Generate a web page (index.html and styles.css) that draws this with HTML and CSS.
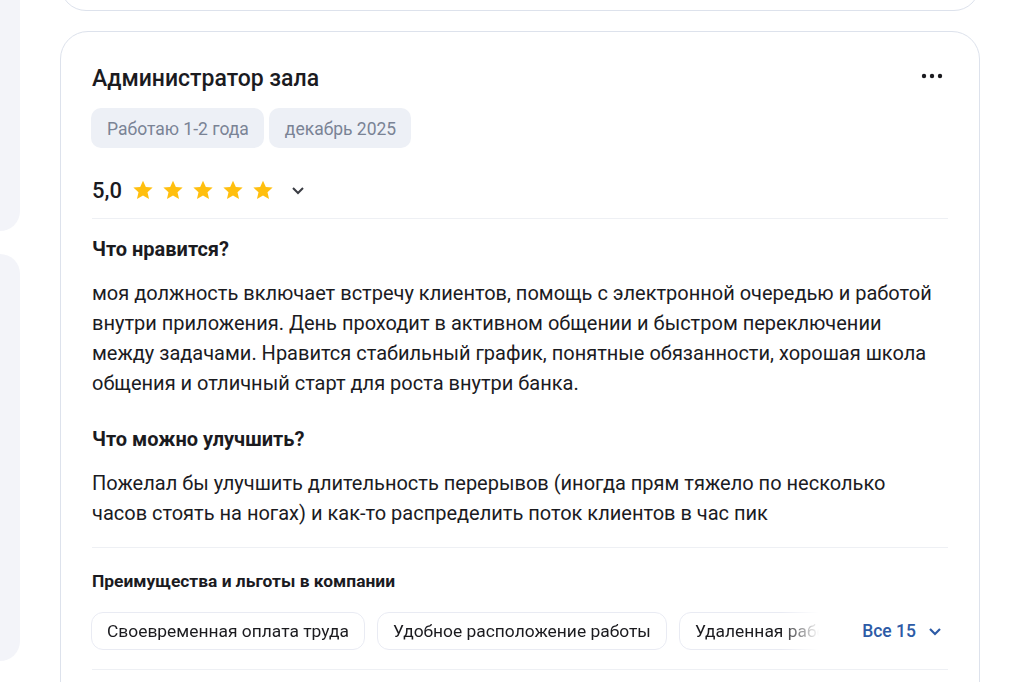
FILE: index.html
```html
<!DOCTYPE html>
<html lang="ru">
<head>
    <meta charset="utf-8">
    <meta name="viewport" content="width=device-width, initial-scale=1.0">
    <title>Отзывы сотрудников</title>
    <link rel="stylesheet" href="styles.css">
</head>
<body>
    <div id="rail">
        <div class="rail-box rail-top"></div>
        <div class="rail-box rail-mid"></div>
    </div>
    <div id="feed">
        <div class="card card-prev"></div>
        <div class="card review">
            <div class="review-head">
                <h2 class="review-title">Администратор зала</h2>
                <button class="more" aria-label="Ещё">
                    <svg width="24" height="6" viewBox="0 0 24 6"><circle cx="4" cy="3" r="2.2"/><circle cx="12" cy="3" r="2.2"/><circle cx="20" cy="3" r="2.2"/></svg>
                </button>
            </div>
            <div class="tags">
                <span class="tag">Работаю 1-2 года</span>
                <span class="tag">декабрь 2025</span>
            </div>
            <div class="rating">
                <span class="score">5,0</span>
                <span class="stars">
                    <svg class="star" viewBox="0 0 24 24"><path d="M12 1.8l3.1 6.9 7.4.7-5.6 5 1.7 7.4L12 17.9l-6.6 3.9 1.7-7.4-5.6-5 7.4-.7z"/></svg>
                    <svg class="star" viewBox="0 0 24 24"><path d="M12 1.8l3.1 6.9 7.4.7-5.6 5 1.7 7.4L12 17.9l-6.6 3.9 1.7-7.4-5.6-5 7.4-.7z"/></svg>
                    <svg class="star" viewBox="0 0 24 24"><path d="M12 1.8l3.1 6.9 7.4.7-5.6 5 1.7 7.4L12 17.9l-6.6 3.9 1.7-7.4-5.6-5 7.4-.7z"/></svg>
                    <svg class="star" viewBox="0 0 24 24"><path d="M12 1.8l3.1 6.9 7.4.7-5.6 5 1.7 7.4L12 17.9l-6.6 3.9 1.7-7.4-5.6-5 7.4-.7z"/></svg>
                    <svg class="star" viewBox="0 0 24 24"><path d="M12 1.8l3.1 6.9 7.4.7-5.6 5 1.7 7.4L12 17.9l-6.6 3.9 1.7-7.4-5.6-5 7.4-.7z"/></svg>
                </span>
                <svg class="chevron" width="14" height="9" viewBox="0 0 14 9"><path d="M2 2l5 5 5-5"/></svg>
            </div>

            <div class="block">
                <h3 class="block-title">Что нравится?</h3>
                <p class="block-text">моя должность включает встречу клиентов, помощь с электронной очередью и работой внутри приложения. День проходит в активном общении и быстром переключении между задачами. Нравится стабильный график, понятные обязанности, хорошая школа общения и отличный старт для роста внутри банка.</p>
                <h3 class="block-title">Что можно улучшить?</h3>
                <p class="block-text">Пожелал бы улучшить длительность перерывов (иногда прям тяжело по несколько часов стоять на ногах) и как-то распределить поток клиентов в час пик</p>
            </div>

            <div class="benefits">
                <h4 class="benefits-title">Преимущества и льготы в компании</h4>
                <div class="benefits-row">
                    <div class="chips">
                        <span class="chip">Своевременная оплата труда</span>
                        <span class="chip">Удобное расположение работы</span>
                        <span class="chip">Удаленная работа</span>
                        <span class="chip">ДМС</span>
                    </div>
                    <a class="all-link" href="#">Все 15
                        <svg width="14" height="9" viewBox="0 0 14 9"><path d="M2 2l5 5 5-5"/></svg>
                    </a>
                </div>
            </div>
            <div class="actions"></div>
        </div>
    </div>
</body>
</html>
```

FILE: styles.css
```css
body {
    font-family: Roboto, "Noto Sans", Arial, sans-serif;
    margin: 0;
    padding: 0;
    display: flex;
    background-color: #fff;
    color: #1b1b1f;
    overflow: hidden;
    height: 682px;
}

#rail {
    width: 20px;
    flex: none;
    display: flex;
    flex-direction: column;
    gap: 23px;
}

.rail-box {
    background-color: #f3f4f9;
    border-radius: 0 20px 20px 0;
}

.rail-top {
    margin-top: -20px;
    height: 251px;
}

.rail-mid {
    height: 407px;
}

#feed {
    margin-left: 40px;
    width: 920px;
    flex: none;
}

.card {
    border: 1px solid #dde2ec;
    border-radius: 28px;
    background-color: #fff;
    box-sizing: border-box;
}

.card-prev {
    height: 60px;
    margin-top: -49px;
    border-radius: 26px;
}

.review {
    margin-top: 20px;
    padding: 32px 31px 0;
}

.review-head {
    display: flex;
    justify-content: space-between;
    align-items: center;
    height: 30px;
}

.review-title {
    margin: 0;
    font-size: 23px;
    font-weight: 500;
    line-height: 30px;
}

.more {
    border: 0;
    background: none;
    padding: 0;
    margin: 0 4px 6px 0;
    display: flex;
    fill: #1b1b1f;
}

.tags {
    display: flex;
    gap: 5px;
    margin-top: 14px;
    margin-left: -1px;
}

.tag {
    background-color: #edf0f6;
    color: #7a8395;
    font-size: 17.5px;
    line-height: 40px;
    padding: 1px 15px 0 16px;
    height: 39px;
    border-radius: 10px;
}

.rating {
    display: flex;
    align-items: center;
    height: 32px;
    margin-top: 26px;
    padding-bottom: 12px;
    border-bottom: 1px solid #eef0f4;
}

.score {
    font-size: 22px;
    font-weight: 500;
    margin-right: 10px;
}

.stars {
    display: flex;
    gap: 8px;
}

.star {
    width: 22px;
    height: 22px;
    fill: #ffbf0f;
}

.chevron {
    margin-left: 17px;
    fill: none;
    stroke: #3b3d44;
    stroke-width: 2;
}

.block {
    padding: 15px 0 19px;
    border-bottom: 1px solid #eef0f4;
}

.block-title {
    margin: 0 0 14px;
    font-size: 20px;
    font-weight: 700;
    line-height: 30px;
}

.block-text {
    max-width: 848px;
    margin: 0 0 26px;
    font-size: 20px;
    line-height: 30px;
}

.block-text:last-child {
    margin-bottom: 0;
}

.benefits {
    padding: 21px 0 19px;
    border-bottom: 1px solid #eef0f4;
}

.benefits-title {
    margin: 0 0 19px;
    font-size: 17.4px;
    font-weight: 700;
    line-height: 24px;
}

.benefits-row {
    display: flex;
    align-items: center;
}

.chips {
    display: flex;
    gap: 12px;
    width: 728px;
    margin-left: -1px;
    overflow: hidden;
    -webkit-mask-image: linear-gradient(to right, #000 690px, transparent 728px);
    mask-image: linear-gradient(to right, #000 690px, transparent 728px);
}

.chip {
    flex: none;
    border: 1px solid #e9ebf3;
    border-radius: 12px;
    padding: 0 15px;
    font-size: 17.4px;
    line-height: 36px;
    white-space: nowrap;
}

.all-link {
    margin-left: auto;
    margin-right: 6px;
    display: flex;
    align-items: center;
    gap: 12px;
    color: #2d5ba6;
    font-size: 17.5px;
    font-weight: 500;
    text-decoration: none;
}

.all-link svg {
    fill: none;
    stroke: #2d5ba6;
    stroke-width: 2.2;
}

.actions {
    height: 80px;
}
```
